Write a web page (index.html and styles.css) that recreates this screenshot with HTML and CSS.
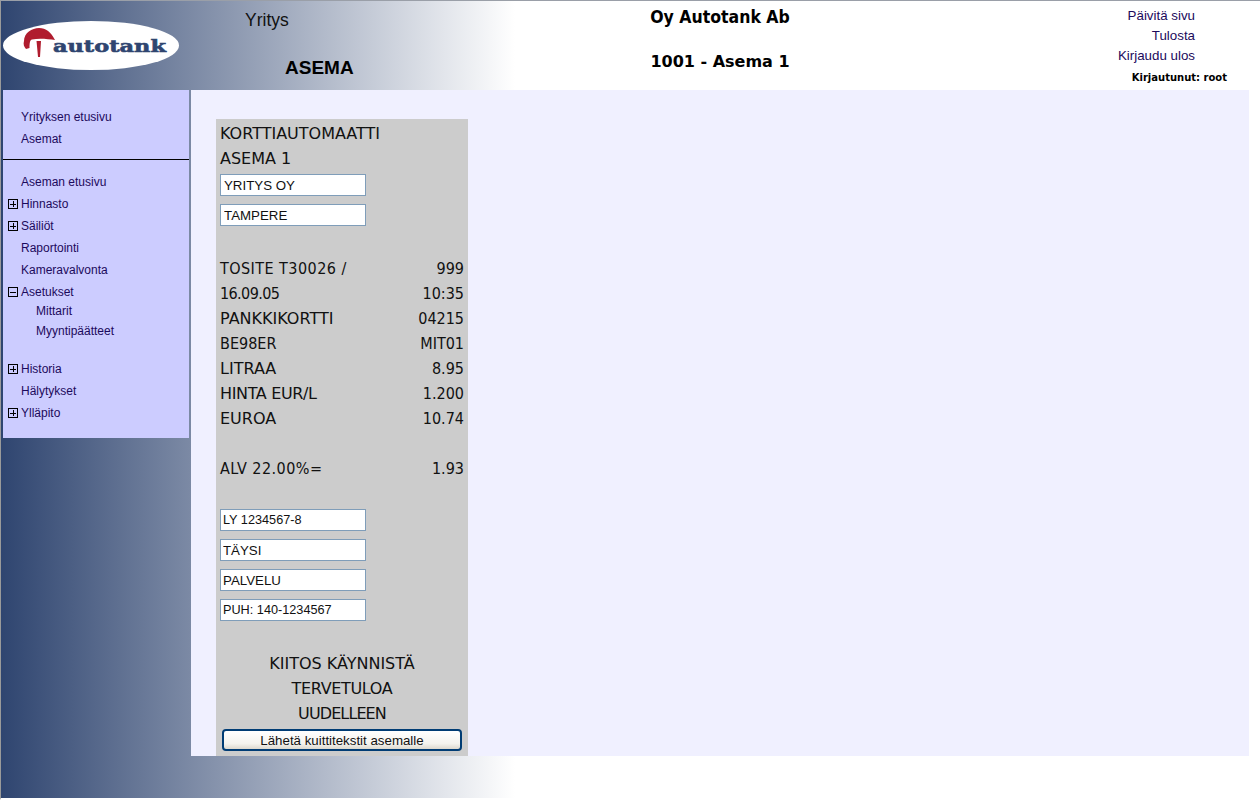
FILE: index.html
```html
<!DOCTYPE html>
<html lang="fi">
<head>
  <meta charset="UTF-8">
  <title>Autotank</title>
  <link rel="stylesheet" href="styles.css">
</head>
<body>
  <div class="page">
    <header class="top">
      <div class="logo">
        <svg width="190" height="90" viewBox="0 0 190 90">
          <defs>
            <filter id="soft"><feGaussianBlur stdDeviation="0.6"/></filter>
          </defs>
          <ellipse cx="90" cy="45.500" rx="88" ry="24.500" fill="#fff" filter="url(#soft)"/>
          <path d="M23 41 C23 33 31 28 38 28 C45 28 50 32 54 40 C47 39 38 38 31 39.500 C29 40 28.500 43 28.500 48 L25 49 C23 47 22 44 23 41 Z" fill="#b01c2e"/>
          <path d="M35.500 41 L40 41 L39 57 L37 57 Z" fill="#b01c2e"/>
          <text x="52" y="52" class="logo-text" textLength="113" lengthAdjust="spacingAndGlyphs">autotank</text>
        </svg>
      </div>
      <div class="section">
        <div class="company">Yritys</div>
        <div class="station">ASEMA</div>
      </div>
      <div class="titles">
        <div class="title-company">Oy Autotank Ab</div>
        <div class="title-station">1001 - Asema 1</div>
      </div>
      <div class="links">
        <a href="#">Päivitä sivu</a>
        <a href="#">Tulosta</a>
        <a href="#">Kirjaudu ulos</a>
        <div class="user">Kirjautunut: root</div>
      </div>
    </header>
    <div class="main">
      <nav class="sidebar">
        <ul class="menu menu-first">
          <li><a href="#">Yrityksen etusivu</a></li>
          <li><a href="#">Asemat</a></li>
        </ul>
        <ul class="menu">
          <li><a href="#">Aseman etusivu</a></li>
          <li><span class="tree"></span><a href="#">Hinnasto</a></li>
          <li><span class="tree"></span><a href="#">Säiliöt</a></li>
          <li><a href="#">Raportointi</a></li>
          <li><a href="#">Kameravalvonta</a></li>
          <li><span class="tree open"></span><a href="#">Asetukset</a></li>
          <li class="sub first-sub"><a href="#">Mittarit</a></li>
          <li class="sub last-sub"><a href="#">Myyntipäätteet</a></li>
          <li><span class="tree"></span><a href="#">Historia</a></li>
          <li><a href="#">Hälytykset</a></li>
          <li><span class="tree"></span><a href="#">Ylläpito</a></li>
        </ul>
      </nav>
      <section class="content">
        <form class="receipt">
          <div class="row">KORTTIAUTOMAATTI</div>
          <div class="row">ASEMA 1</div>
          <div class="field"><input type="text" value="YRITYS OY"></div>
          <div class="field"><input type="text" value="TAMPERE"></div>
          <div class="row spaced"><span class="mix">TOSITE T30026 /</span><span class="val">999</span></div>
          <div class="row"><span class="val tight">16.09.05</span><span class="val">10:35</span></div>
          <div class="row"><span>PANKKIKORTTI</span><span class="val">04215</span></div>
          <div class="row"><span class="val">BE98ER</span><span class="val">MIT01</span></div>
          <div class="row"><span>LITRAA</span><span class="val">8.95</span></div>
          <div class="row"><span class="narrow">HINTA EUR/L</span><span class="val">1.200</span></div>
          <div class="row"><span>EUROA</span><span class="val">10.74</span></div>
          <div class="row vat"><span class="mix">ALV 22.00%=</span><span class="val">1.93</span></div>
          <div class="field field-first"><input class="number" type="text" value="LY 1234567-8"></div>
          <div class="field"><input class="tail" type="text" value="TÄYSI"></div>
          <div class="field"><input class="tail" type="text" value="PALVELU"></div>
          <div class="field"><input class="number" type="text" value="PUH: 140-1234567"></div>
          <div class="row center spaced">KIITOS KÄYNNISTÄ</div>
          <div class="row center"><span class="narrow">TERVETULOA</span></div>
          <div class="row center"><span class="narrower">UUDELLEEN</span></div>
          <button type="button" class="send">Lähetä kuittitekstit asemalle</button>
        </form>
      </section>
    </div>
  </div>
</body>
</html>
```

FILE: styles.css
```css
* { box-sizing: border-box; }
html, body { height: 100%; }
body {
  margin: 0;
  background: #fff;
  font-family: "Liberation Sans", Arial, sans-serif;
  overflow: hidden;
}
a { color: #1c0a5c; text-decoration: none; }
.page {
  height: 800px;
  border-top: 1px solid #9a9fa8;
  border-left: 1px solid #9a9a9a;
  border-bottom: 2px solid #fff;
  background: linear-gradient(to right, #2f4570 0, #fff 514px) no-repeat;
}

/* header */
.top {
  display: flex;
  height: 89px;
}
.logo { width: 189px; margin-top: -1px; }
.logo svg { display: block; }
.logo-text {
  font-family: "DejaVu Serif", serif;
  font-weight: bold;
  font-size: 17px;
  fill: #2f4570;
  stroke: #2f4570;
  stroke-width: 0.6px;
}
.section { width: 325px; }
.company {
  font-size: 17.500px;
  line-height: 20px;
  color: #111;
  padding: 9px 0 0 55px;
}
.station {
  font-size: 19px;
  line-height: 22px;
  font-weight: bold;
  color: #000;
  padding: 27px 0 0 95px;
}
.titles {
  width: 410px;
  text-align: center;
  font-family: "DejaVu Sans", sans-serif;
  font-weight: bold;
  color: #000;
}
.title-company {
  font-stretch: condensed;
  font-size: 17.500px;
  padding-top: 6px;
}
.title-station {
  font-size: 16px;
  padding-top: 25px;
}
.links {
  width: 302px;
  display: flex;
  flex-direction: column;
  align-items: flex-end;
  font-size: 13.330px;
  padding: 5px 0 0;
}
.links a { line-height: 20px; margin-right: 32px; }
.user {
  font-family: "DejaVu Sans", sans-serif;
  font-size: 10px;
  font-weight: bold;
  color: #000;
  margin-top: 6px;
}

/* sidebar */
.main {
  display: flex;
  align-items: flex-start;
}
.sidebar {
  width: 186px;
  height: 348px;
  margin: 0 2px 0 2px;
  background: #ccf;
  font-size: 12px;
}
.menu {
  list-style: none;
  margin: 0;
  padding: 11px 0 0;
}
.menu-first {
  padding: 16px 0 9px;
  border-bottom: 1px solid #000;
}
.menu li {
  display: flex;
  align-items: center;
  height: 22px;
  padding-left: 18px;
  position: relative;
}
.menu .sub { height: 20px; padding-left: 33px; }
.menu .first-sub { margin-top: -2px; }
.menu .last-sub { margin-bottom: 17px; }
.tree {
  position: absolute;
  left: 5px;
  top: 6px;
  width: 10px;
  height: 10px;
  border: 1px solid #000;
  background: linear-gradient(#000, #000) center / 6px 1px no-repeat,
              linear-gradient(#000, #000) center / 1px 6px no-repeat;
}
.tree.open {
  background: linear-gradient(#000, #000) center / 6px 1px no-repeat;
}

/* receipt */
.content {
  width: 1058px;
  height: 666px;
  background: #f0f0ff;
  padding: 29px 0 0 25px;
}
.receipt {
  width: 252px;
  height: 637px;
  background: #ccc;
  padding: 2px 4px 0;
  font-family: "DejaVu Sans", sans-serif;
  font-size: 16px;
  color: #111;
}
.row {
  display: flex;
  justify-content: space-between;
  align-items: center;
  height: 25px;
}
.row.center { justify-content: center; }
.val, .mix {
  font-family: "DejaVu Sans Condensed", "DejaVu Sans", sans-serif;
  font-stretch: condensed;
}
.mix { letter-spacing: 0.450px; }
.tight { letter-spacing: -0.600px; }
.narrow { letter-spacing: -0.350px; }
.narrower { letter-spacing: -0.900px; }
.spaced { margin-top: 26px; }
.vat { margin-top: 25px; }
.field {
  display: flex;
  align-items: center;
  height: 30px;
}
.receipt > .field:nth-child(3) { margin-top: -1px; }
.field-first { margin-top: 24px; }
.field input {
  width: 146px;
  height: 22px;
  border: 1px solid #7f9db9;
  background: #fff;
  padding: 0 3px;
  font-family: "Liberation Sans", Arial, sans-serif;
  font-size: 13.300px;
  color: #111;
}
.field .tail { padding-left: 2px; }
.field .number { padding-left: 2px; font-size: 12.700px; }
.send {
  display: block;
  width: 240px;
  height: 22px;
  margin: 3px 0 0 2px;
  padding: 0;
  border: 2px solid #003c74;
  border-radius: 4px;
  background: linear-gradient(#fff, #f4f3ee 70%, #dcd8ce);
  font-family: "Liberation Sans", Arial, sans-serif;
  font-size: 13.300px;
  color: #111;
}
```
